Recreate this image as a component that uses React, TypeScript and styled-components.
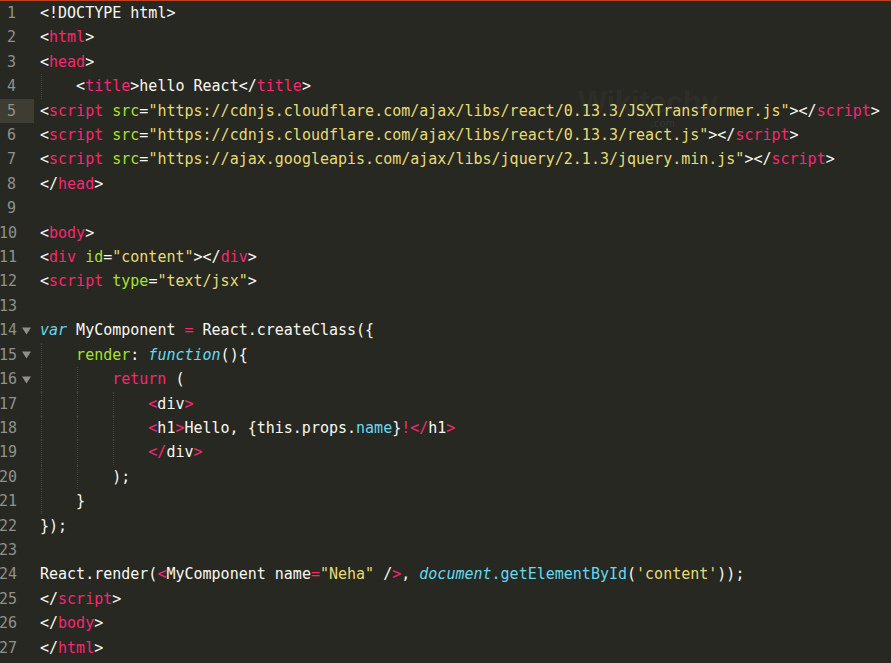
import React from 'react'
import styled, { createGlobalStyle } from 'styled-components'

type Kind = 'w' | 'p' | 'g' | 'y' | 'b' | 'k'
type Tok = [string, Kind]

interface Line {
  indent?: number
  fold?: boolean
  toks: Tok[]
}

const colors: Record<Kind, string> = {
  w: '#f8f8f2',
  p: '#f92672',
  g: '#a6e22e',
  y: '#e6db74',
  b: '#66d9ef',
  k: '#66d9ef',
}

const CHAR = 9.03
const LINE_H = 24.42

const GlobalStyle = createGlobalStyle`
  html, body {
    margin: 0;
    padding: 0;
    background: #272822;
  }
`

const Editor = styled.div`
  position: relative;
  width: 891px;
  height: 663px;
  overflow: hidden;
  background: #272822;
  border-top: 1px solid #c2401d;
  box-sizing: border-box;
  font-family: 'DejaVu Sans Mono', 'Liberation Mono', monospace;
  font-size: 15px;
`

const Row = styled.div`
  display: flex;
  height: ${LINE_H}px;
  line-height: ${LINE_H}px;
  white-space: pre;
`

const Gutter = styled.div<{ $active?: boolean }>`
  display: flex;
  align-items: center;
  width: 34px;
  flex: none;
  background: ${({ $active }) => ($active ? '#3e3d32' : 'transparent')};
  color: #90918b;
`

const Num = styled.span<{ $wide?: boolean }>`
  width: 22px;
  padding-left: ${({ $wide }) => ($wide ? '0' : '7px')};
  margin-left: ${({ $wide }) => ($wide ? '-1px' : '0')};
  box-sizing: border-box;
`

const FoldMark = styled.svg`
  width: 9px;
  height: 9px;
  margin-left: 1px;
`

const Code = styled.div`
  display: flex;
  margin-left: 6px;
`

const Guide = styled.span`
  display: inline-block;
  width: ${CHAR * 4}px;
  height: 100%;
  border-left: 1px dotted #46463e;
  margin-left: 1px;
  margin-right: -1px;
  box-sizing: border-box;
`

const Token = styled.span<{ $kind: Kind }>`
  color: ${({ $kind }) => colors[$kind]};
  font-style: ${({ $kind }) => ($kind === 'k' ? 'italic' : 'normal')};
`

const Watermark = styled.div`
  position: absolute;
  left: 578px;
  top: 84px;
  font-family: 'Liberation Sans', Arial, sans-serif;
  font-weight: bold;
  font-size: 31px;
  letter-spacing: -0.5px;
  color: rgba(255, 255, 255, 0.055);
  pointer-events: none;
`

const WatermarkSub = styled.div`
  position: absolute;
  left: 651px;
  top: 116px;
  font-family: 'Liberation Sans', Arial, sans-serif;
  font-size: 11px;
  color: rgba(255, 255, 255, 0.09);
  pointer-events: none;
`

const tag = (name: string, close = false): Tok[] => [
  [close ? '</' : '<', 'w'],
  [name, 'p'],
  ['>', 'w'],
]

const scriptSrc = (url: string): Tok[] => [
  ['<', 'w'],
  ['script', 'p'],
  [' src', 'g'],
  ['=', 'w'],
  [`"${url}"`, 'y'],
  ['></', 'w'],
  ['script', 'p'],
  ['>', 'w'],
]

const lines: Line[] = [
  { toks: [['<!DOCTYPE html>', 'w']] },
  { toks: tag('html') },
  { toks: tag('head') },
  { indent: 1, toks: [...tag('title'), ['hello React', 'w'], ...tag('title', true)] },
  { toks: scriptSrc('https://cdnjs.cloudflare.com/ajax/libs/react/0.13.3/JSXTransformer.js') },
  { toks: scriptSrc('https://cdnjs.cloudflare.com/ajax/libs/react/0.13.3/react.js') },
  { toks: scriptSrc('https://ajax.googleapis.com/ajax/libs/jquery/2.1.3/jquery.min.js') },
  { toks: tag('head', true) },
  { toks: [] },
  { toks: tag('body') },
  {
    toks: [
      ['<', 'w'], ['div', 'p'], [' id', 'g'], ['=', 'w'], ['"content"', 'y'],
      ['></', 'w'], ['div', 'p'], ['>', 'w'],
    ],
  },
  { toks: [['<', 'w'], ['script', 'p'], [' type', 'g'], ['=', 'w'], ['"text/jsx"', 'y'], ['>', 'w']] },
  { toks: [] },
  { fold: true, toks: [['var', 'k'], [' MyComponent ', 'w'], ['=', 'p'], [' React.createClass({', 'w']] },
  { indent: 1, fold: true, toks: [['render', 'g'], [': ', 'w'], ['function', 'k'], ['(){', 'w']] },
  { indent: 2, fold: true, toks: [['return', 'p'], [' (', 'w']] },
  { indent: 3, toks: [['<', 'p'], ['div', 'w'], ['>', 'p']] },
  {
    indent: 3,
    toks: [
      ['<', 'p'], ['h1', 'w'], ['>', 'p'], ['Hello, {this.props.', 'w'], ['name', 'b'],
      ['}', 'w'], ['!', 'p'], ['</', 'p'], ['h1', 'w'], ['>', 'p'],
    ],
  },
  { indent: 3, toks: [['</', 'p'], ['div', 'w'], ['>', 'p']] },
  { indent: 2, toks: [[');', 'w']] },
  { indent: 1, toks: [['}', 'w']] },
  { toks: [['});', 'w']] },
  { toks: [] },
  {
    toks: [
      ['React.render(', 'w'], ['<', 'p'], ['MyComponent name', 'w'], ['=', 'p'], ['"Neha"', 'y'],
      [' /', 'w'], ['>', 'p'], [', ', 'w'], ['document', 'k'], ['.getElementById', 'b'],
      ['(', 'w'], ["'content'", 'y'], ['));', 'w'],
    ],
  },
  { toks: tag('script', true) },
  { toks: tag('body', true) },
  { toks: tag('html', true) },
]

export default function App() {
  return (
    <>
      <GlobalStyle />
      <Editor>
        <Watermark>Wikitechy</Watermark>
        <WatermarkSub>.com</WatermarkSub>
        {lines.map((line, i) => (
          <Row key={i}>
            <Gutter $active={i === 4}>
              <Num $wide={i >= 9}>{i + 1}</Num>
              {line.fold && (
                <FoldMark viewBox="0 0 9 9">
                  <path d="M0 1.5 L9 1.5 L4.5 8.5 Z" fill="#8f908a" />
                </FoldMark>
              )}
            </Gutter>
            <Code>
              {Array.from({ length: line.indent || 0 }).map((_, g) => (
                <Guide key={g} />
              ))}
              {line.toks.map(([text, kind], t) => (
                <Token key={t} $kind={kind}>
                  {text}
                </Token>
              ))}
            </Code>
          </Row>
        ))}
      </Editor>
    </>
  )
}
